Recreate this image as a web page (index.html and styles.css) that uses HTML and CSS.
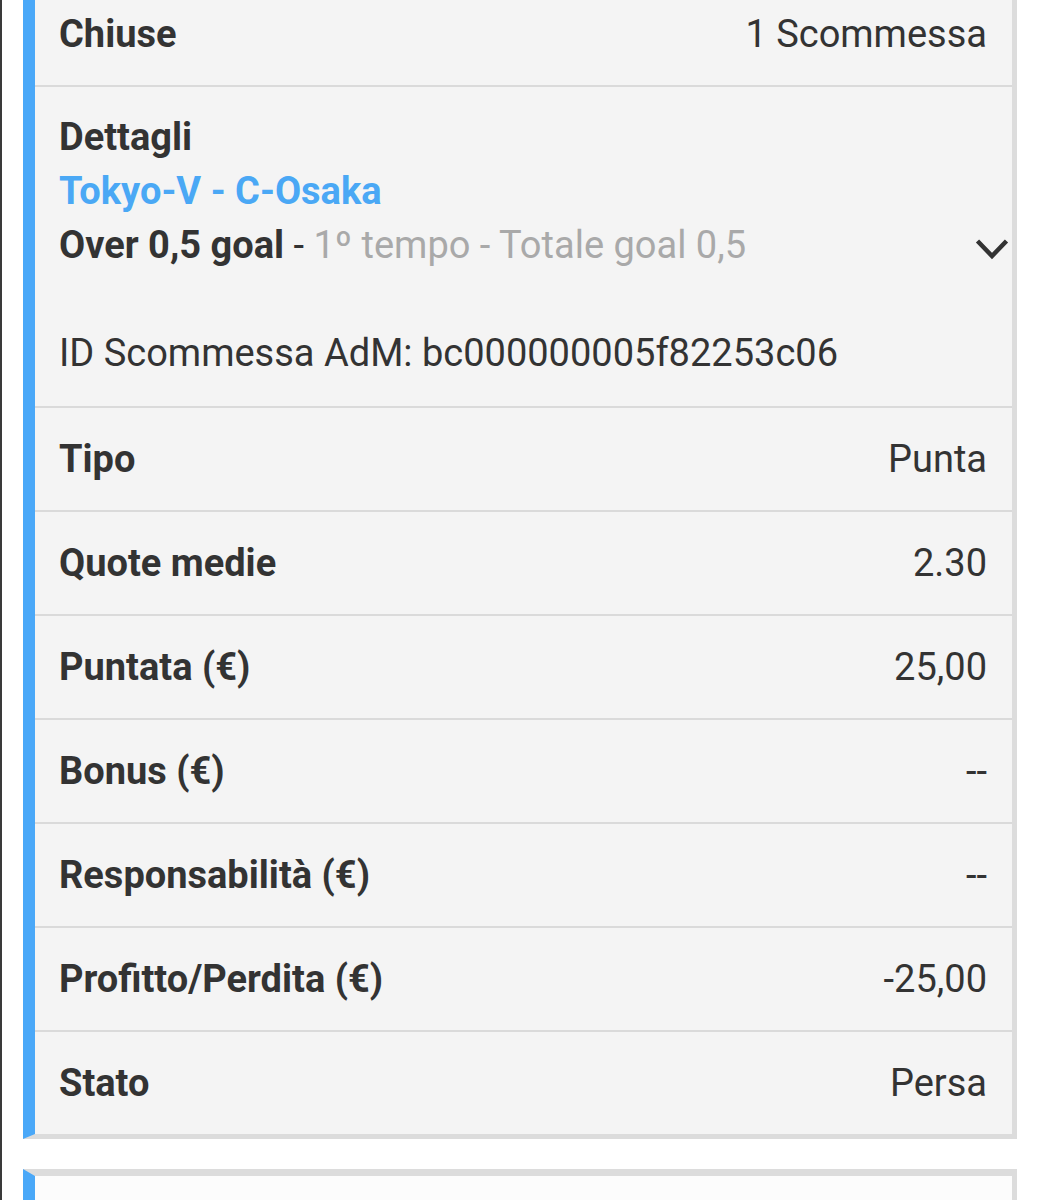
FILE: index.html
```html
<!DOCTYPE html>
<html lang="it">
<head>
<meta charset="utf-8">
<link rel="stylesheet" href="styles.css">
<title>Scommessa</title>
</head>
<body>
<div class="frame">
  <div class="card first">
    <div class="row">
      <span class="label">Chiuse</span>
      <span class="value">1 Scommessa</span>
    </div>
    <div class="details">
      <div class="line label">Dettagli</div>
      <div class="line event">Tokyo-V - C-Osaka</div>
      <div class="line market">
        <span><b class="label">Over 0,5 goal</b> <span class="dash">-</span> <span class="muted">1º tempo - Totale goal 0,5</span></span>
        <svg class="chevron" width="34" height="22" viewBox="0 0 34 22"><path d="M2.5 3 L17 18 L31.5 3" fill="none" stroke="#333" stroke-width="4.5"/></svg>
      </div>
      <div class="line id">ID Scommessa AdM: bc000000005f82253c06</div>
    </div>
    <div class="row"><span class="label">Tipo</span><span class="value">Punta</span></div>
    <div class="row"><span class="label">Quote medie</span><span class="value">2.30</span></div>
    <div class="row"><span class="label">Puntata (€)</span><span class="value">25,00</span></div>
    <div class="row"><span class="label">Bonus (€)</span><span class="value">--</span></div>
    <div class="row"><span class="label">Responsabilità (€)</span><span class="value">--</span></div>
    <div class="row"><span class="label">Profitto/Perdita (€)</span><span class="value">-25,00</span></div>
    <div class="row last"><span class="label">Stato</span><span class="value">Persa</span></div>
  </div>
  <div class="card second"></div>
</div>
</body>
</html>
```

FILE: styles.css
```css
html, body {
  margin: 0;
  padding: 0;
  background: #ffffff;
  overflow: hidden;
}
body {
  font-family: Roboto, "Liberation Sans", Arial, sans-serif;
  color: #333333;
}
.frame {
  border-left: 2px solid #3a3a3a;
  padding: 0 36px 0 21px;
  height: 1200px;
  box-sizing: border-box;
  overflow: hidden;
}
.card {
  background: #f4f4f4;
  border-left: 12px solid #4aa8f8;
  border-right: 5px solid #dcdcdc;
  border-bottom: 5px solid #dcdcdc;
}
.first {
  margin-top: -17px;
}
.row {
  display: flex;
  justify-content: space-between;
  align-items: center;
  height: 102px;
  padding: 0 25px 0 24px;
  border-bottom: 2px solid #dadada;
  font-size: 38px;
}
.row.last {
  border-bottom: none;
}
.label {
  font-weight: 700;
  color: #333333;
}
.value {
  font-weight: 400;
  color: #333333;
}
.details {
  padding: 23px 25px 26px 24px;
  border-bottom: 2px solid #dadada;
  font-size: 38px;
}
.line {
  height: 54px;
  line-height: 54px;
  white-space: nowrap;
}
.event {
  color: #4aa8f5;
  font-weight: 700;
}
.market {
  display: flex;
  justify-content: space-between;
  align-items: center;
}
.dash {
  color: #333333;
}
.muted {
  color: #a9a9a9;
}
.chevron {
  margin-right: -22px;
  margin-top: 8px;
}
.id {
  margin-top: 54px;
  color: #333333;
}
.second {
  margin-top: 30px;
  background: #fcfcfc;
  border-top: 7px solid #dcdcdc;
  border-bottom: none;
  height: 40px;
}
```
